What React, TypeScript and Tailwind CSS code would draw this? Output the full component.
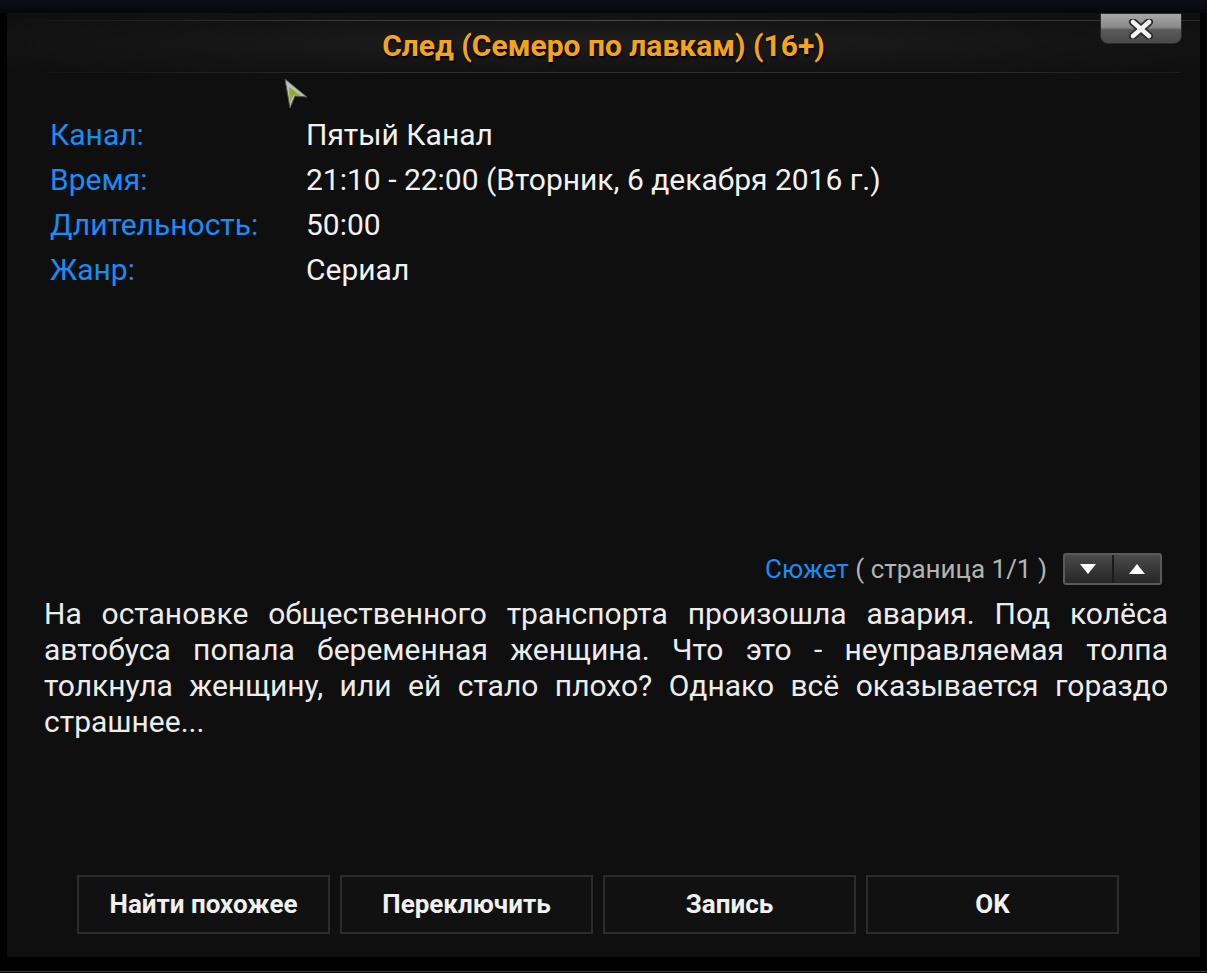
import React from "react";

const info = [
  { label: "Канал:", value: "Пятый Канал" },
  { label: "Время:", value: "21:10 - 22:00 (Вторник, 6 декабря 2016 г.)" },
  { label: "Длительность:", value: "50:00" },
  { label: "Жанр:", value: "Сериал" },
];

const plot =
  "На остановке общественного транспорта произошла авария. Под колёса автобуса попала беременная женщина. Что это - неуправляемая толпа толкнула женщину, или ей стало плохо? Однако всё оказывается гораздо страшнее...";

const buttons = ["Найти похожее", "Переключить", "Запись", "OK"];

function CloseButton() {
  return (
    <div className="absolute right-[18px] top-0 flex h-[31px] w-[82px] items-center justify-center rounded-b-[8px] border border-[#2a2a2a] bg-[linear-gradient(to_bottom,#a8a8a8_0%,#8a8a8a_45%,#5a5a5a_55%,#4a4a4a_100%)]">
      <svg width="26" height="20" viewBox="0 0 26 20">
        <path d="M5 3 L21 17 M21 3 L5 17" stroke="#2a2a2a" strokeWidth="8" strokeLinecap="round" />
        <path d="M5 3 L21 17 M21 3 L5 17" stroke="#f4f4f4" strokeWidth="4.5" strokeLinecap="round" />
      </svg>
    </div>
  );
}

function PageArrows() {
  return (
    <div className="flex h-[32px] w-[99px] overflow-hidden rounded-[3px] border-2 border-[#5a5a5a] bg-[linear-gradient(to_bottom,#4a4a4a,#262626)]">
      <div className="flex flex-1 items-center justify-center border-r-2 border-[#1a1a1a]">
        <svg width="18" height="12" viewBox="0 0 18 12">
          <path d="M1 1 H17 L9 11 Z" fill="#ffffff" />
        </svg>
      </div>
      <div className="flex flex-1 items-center justify-center">
        <svg width="18" height="12" viewBox="0 0 18 12">
          <path d="M1 11 H17 L9 1 Z" fill="#ffffff" />
        </svg>
      </div>
    </div>
  );
}

function Pointer() {
  return (
    <svg className="absolute left-[276px] top-[65px]" width="26" height="32" viewBox="0 0 26 32">
      <path d="M2 1 L24 19 L12 18 L7 30 Z" fill="#bdbdbd" stroke="#555" strokeWidth="1" />
      <path d="M6 9 L18 18 L10 17.5 L7 24 Z" fill="#8fae1b" />
    </svg>
  );
}

export default function App() {
  return (
    <div
      className="relative h-[973px] w-[1207px] overflow-hidden bg-black"
      style={{ fontFamily: "Roboto, 'Noto Sans', 'Liberation Sans', sans-serif" }}
    >
      <div className="h-[13px] bg-[linear-gradient(to_bottom,#0b0f14,#05080b)]" />
      <div className="relative ml-[7px] flex h-[944px] w-[1193px] flex-col bg-[#0f0f0f]">
        <div className="relative h-[60px] bg-[radial-gradient(ellipse_at_center,#1e1e1e_0%,#141414_55%,#0f0f0f_100%)]">
          <div className="absolute left-0 right-0 top-[7px] h-px bg-[linear-gradient(to_right,transparent,#3c3c3c_30%,#4a4a4a_60%,#2a2a2a)]" />
          <div className="absolute bottom-0 left-[40px] right-[20px] h-px bg-[linear-gradient(to_right,#141414,#2e2e2e_30%,#2e2e2e_80%,#1c1c1c)]" />
          <div className="flex h-full items-center justify-center pt-[4px] text-[30px] font-bold text-[#f4a41c] [text-shadow:1px_2px_2px_#000]">
            След (Семеро по лавкам) (16+)
          </div>
          <CloseButton />
        </div>

        <div className="flex flex-col pl-[43px] pt-[39px]">
          {info.map((row) => (
            <div key={row.label} className="flex h-[45px] items-center text-[30px]">
              <span className="w-[256px] text-[#1a8cf5]">{row.label}</span>
              <span className="text-[#f2f2f2]">{row.value}</span>
            </div>
          ))}
        </div>

        <div className="mt-[261px] flex h-[32px] items-center justify-end gap-[16px] pr-[38px] text-[26px]">
          <span>
            <span className="text-[#1a8cf5]">Сюжет</span>
            <span className="text-[#b4b4b4]"> ( страница 1/1 )</span>
          </span>
          <PageArrows />
        </div>

        <p className="mt-[11px] pl-[37px] pr-[32px] text-justify text-[30px] leading-[36px] text-[#ececec]">
          {plot}
        </p>

        <div className="mt-auto mb-[23px] flex gap-[10px] pl-[70px]">
          {buttons.map((b) => (
            <div
              key={b}
              className="flex h-[59px] w-[253px] items-center justify-center border-2 border-[#2c2c2c] bg-[#111111] text-[26px] font-bold text-[#f0f0f0]"
            >
              {b}
            </div>
          ))}
        </div>
        <Pointer />
      </div>
      <div className="mt-[14px] h-px bg-[#3a3a3a]" />
    </div>
  );
}
